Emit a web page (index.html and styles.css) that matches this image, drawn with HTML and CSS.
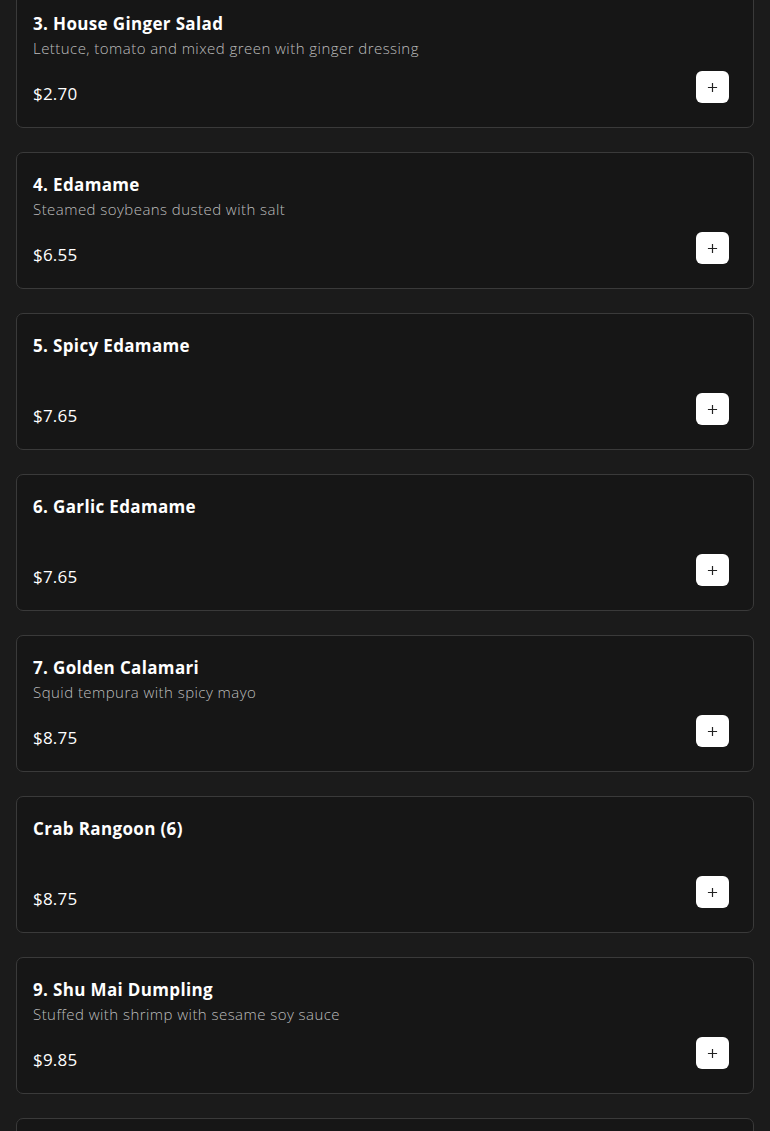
FILE: index.html
```html
<!DOCTYPE html>
<html lang="en">
<head>
    <meta charset="UTF-8">
    <meta name="viewport" content="width=device-width, initial-scale=1.0">
    <title>Menu - Appetizers</title>
    <link rel="stylesheet" href="styles.css">
</head>
<body>
    <div class="menu-list">
        <div class="menu-item">
            <h3 class="item-name">3. House Ginger Salad</h3>
            <p class="item-desc">Lettuce, tomato and mixed green with ginger dressing</p>
            <div class="item-footer">
                <span class="item-price">$2.70</span>
                <button class="add-btn" aria-label="Add"><svg viewBox="0 0 12 12"><path d="M6 1v10M1 6h10"/></svg></button>
            </div>
        </div>
        <div class="menu-item">
            <h3 class="item-name">4. Edamame</h3>
            <p class="item-desc">Steamed soybeans dusted with salt</p>
            <div class="item-footer">
                <span class="item-price">$6.55</span>
                <button class="add-btn" aria-label="Add"><svg viewBox="0 0 12 12"><path d="M6 1v10M1 6h10"/></svg></button>
            </div>
        </div>
        <div class="menu-item">
            <h3 class="item-name">5. Spicy Edamame</h3>
            <p class="item-desc"></p>
            <div class="item-footer">
                <span class="item-price">$7.65</span>
                <button class="add-btn" aria-label="Add"><svg viewBox="0 0 12 12"><path d="M6 1v10M1 6h10"/></svg></button>
            </div>
        </div>
        <div class="menu-item">
            <h3 class="item-name">6. Garlic Edamame</h3>
            <p class="item-desc"></p>
            <div class="item-footer">
                <span class="item-price">$7.65</span>
                <button class="add-btn" aria-label="Add"><svg viewBox="0 0 12 12"><path d="M6 1v10M1 6h10"/></svg></button>
            </div>
        </div>
        <div class="menu-item">
            <h3 class="item-name">7. Golden Calamari</h3>
            <p class="item-desc">Squid tempura with spicy mayo</p>
            <div class="item-footer">
                <span class="item-price">$8.75</span>
                <button class="add-btn" aria-label="Add"><svg viewBox="0 0 12 12"><path d="M6 1v10M1 6h10"/></svg></button>
            </div>
        </div>
        <div class="menu-item">
            <h3 class="item-name">Crab Rangoon (6)</h3>
            <p class="item-desc"></p>
            <div class="item-footer">
                <span class="item-price">$8.75</span>
                <button class="add-btn" aria-label="Add"><svg viewBox="0 0 12 12"><path d="M6 1v10M1 6h10"/></svg></button>
            </div>
        </div>
        <div class="menu-item">
            <h3 class="item-name">9. Shu Mai Dumpling</h3>
            <p class="item-desc">Stuffed with shrimp with sesame soy sauce</p>
            <div class="item-footer">
                <span class="item-price">$9.85</span>
                <button class="add-btn" aria-label="Add"><svg viewBox="0 0 12 12"><path d="M6 1v10M1 6h10"/></svg></button>
            </div>
        </div>
        <div class="menu-item"></div>
    </div>
</body>
</html>
```

FILE: styles.css
```css
* {
    margin: 0;
    padding: 0;
    box-sizing: border-box;
}
body {
    font-family: "Open Sans", "DejaVu Sans", sans-serif;
    background-color: #1b1b1b;
    color: #ffffff;
    overflow: hidden;
}
.menu-list {
    display: flex;
    flex-direction: column;
    gap: 24px;
    padding: 0 16px;
    margin-top: -9px;
}
.menu-item {
    height: 137px;
    flex-shrink: 0;
    background-color: #161616;
    border: 1px solid #3a3a3a;
    border-radius: 7px;
    padding: 20px 24px 20px 16px;
}
.item-name {
    font-size: 17px;
    font-weight: 700;
    line-height: 24px;
    letter-spacing: 0.35px;
}
.item-desc {
    font-size: 15px;
    font-weight: 300;
    line-height: 22px;
    height: 22px;
    margin-top: 1px;
    letter-spacing: 0.45px;
    color: #bdbdbd;
}
.item-footer {
    display: flex;
    justify-content: space-between;
    align-items: flex-start;
    margin-top: 12px;
}
.item-price {
    font-size: 17px;
    line-height: 24px;
    margin-top: 11px;
    letter-spacing: 0.2px;
}
.add-btn {
    width: 33px;
    height: 32px;
    background-color: #ffffff;
    border: none;
    border-radius: 6px;
    display: flex;
    align-items: center;
    justify-content: center;
    cursor: pointer;
}
.add-btn svg {
    width: 11px;
    height: 11px;
    stroke: #222222;
    stroke-width: 1.3;
    fill: none;
}
```
